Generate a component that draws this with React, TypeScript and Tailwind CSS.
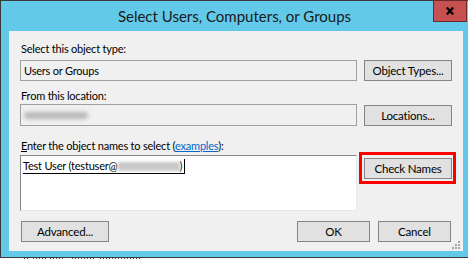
import React from 'react';

function Btn({ label, w = 'w-[88px]' }: { label: React.ReactNode; w?: string }) {
  return (
    <div
      className={`${w} h-[21px] shrink-0 border border-[#858585] bg-[#e1e1e1] flex items-center justify-center text-[11.5px] tracking-[-0.2px] text-black`}
    >
      {label}
    </div>
  );
}

function Blur({ w }: { w: string }) {
  return <span className={`inline-block ${w} h-[7px] align-middle bg-[#b8b8b8] blur-[2px] rounded-full`} />;
}

export default function App() {
  return (
    <div className="w-[468px] h-[259px] bg-white overflow-hidden font-['Lato','Liberation_Sans',Arial,sans-serif]">
      {/* window frame */}
      <div className="relative w-[469px] h-[258px] border border-[#3a3a3a] bg-[#63c9e9] pl-[8px] flex flex-col">
        {/* title bar */}
        <div className="h-[30px] -ml-[8px] flex items-center justify-center text-[15px] leading-[20px] text-[#1a1a1a]">
          Select Users, Computers, or Groups
        </div>
        <div className="absolute -top-[1px] right-[1px] w-[34px] h-[22px] border border-[#6b2a2a] bg-[#c75050] flex items-center justify-center">
          <svg width="8" height="8" viewBox="0 0 8 8">
            <path d="M0.8 0.5 L7.2 7.5 M7.2 0.5 L0.8 7.5" stroke="#000" strokeWidth="2.2" />
          </svg>
        </div>

        {/* client area */}
        <div className="relative w-[454px] h-[220px] bg-[#f0f0f0] px-[11px] flex flex-col text-[11px] tracking-[-0.2px] leading-[15px] text-black">
          <div className="mt-[10px] ml-[1px]">Select this object type:</div>
          <div className="mt-[4px] flex items-start gap-[7px]">
            <div className="w-[337px] h-[21px] border border-[#a0a0a0] flex items-center pl-[3px]">Users or Groups</div>
            <Btn label="Object Types..." />
          </div>

          <div className="mt-[7px] ml-[1px]">From this location:</div>
          <div className="mt-[1px] flex items-start gap-[7px]">
            <div className="w-[337px] h-[22px] border border-[#a0a0a0] flex items-center pl-[3px]">
              <Blur w="w-[64px]" />
            </div>
            <div className="mt-[1px]">
              <Btn label="Locations..." />
            </div>
          </div>

          <div className="mt-[12px] ml-[1px]">
            <span className="underline">E</span>nter the object names to select (
            <span className="text-[#0066cc] underline">examples</span>):
          </div>
          <div className="mt-[2px] flex items-start gap-[7px]">
            <div className="w-[337px] h-[56px] bg-white border border-[#828790] border-r-[#e3e9ef] border-b-[#e3e9ef] pl-[2px] pt-[2px]">
              <span className="inline-flex items-center border-b border-r border-black pr-[2px] leading-[14px]">
                Test User (testuser@
                <span className="inline-block w-[62px] h-[9px] bg-[#c8c8c8] blur-[1.5px]" />)
              </span>
            </div>
            <div className="relative mt-[3px]">
              <Btn label="Check Names" />
              <div className="absolute -left-[5px] -top-[6px] -right-[4px] -bottom-[5px] border-[3px] border-[#ff0000]" />
            </div>
          </div>

          <div className="mt-[10px] flex items-start">
            <div className="ml-[1px]">
              <Btn label="Advanced..." />
            </div>
            <div className="ml-auto flex gap-[8px] mr-[1px]">
              <Btn label="OK" w="w-[73px]" />
              <Btn label="Cancel" w="w-[73px]" />
            </div>
          </div>

          {/* size grip */}
          <svg className="absolute right-[2px] bottom-[1px]" width="10" height="10" viewBox="0 0 10 10">
            <g fill="#a8a8a8">
              <rect x="7" y="1" width="2" height="2" />
              <rect x="4" y="4" width="2" height="2" />
              <rect x="7" y="4" width="2" height="2" />
              <rect x="1" y="7" width="2" height="2" />
              <rect x="4" y="7" width="2" height="2" />
              <rect x="7" y="7" width="2" height="2" />
            </g>
          </svg>
        </div>
      </div>
      {/* page content peeking out below the dialog */}
      <svg className="ml-[24px]" width="120" height="1" viewBox="0 0 120 1">
        <path d="M0 0.5 H6 M9 0.5 H22 M26 0.5 H40 M48 0.5 H70 M76 0.5 H116" stroke="#555" strokeDasharray="1 2" />
      </svg>
    </div>
  );
}
